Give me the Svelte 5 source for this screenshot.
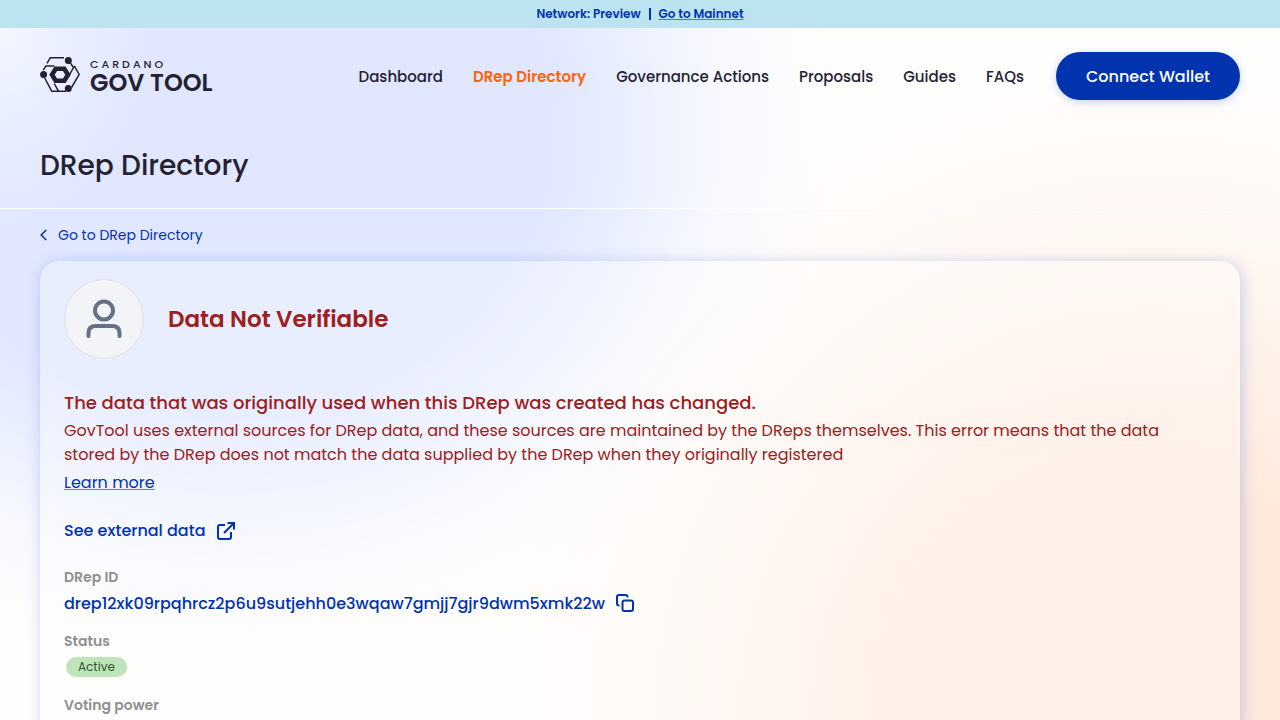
<script>
  const links = [
    { label: 'Dashboard' },
    { label: 'DRep Directory', active: true },
    { label: 'Governance Actions' },
    { label: 'Proposals' },
    { label: 'Guides' },
    { label: 'FAQs' },
  ];
  const drepId = 'drep12xk09rpqhrcz2p6u9sutjehh0e3wqaw7gmjj7gjr9dwm5xmk22w';
  const copyId = () => navigator.clipboard?.writeText(drepId);
</script>

<div class="page">
  <div class="network">
    <span>Network: Preview</span>
    <span class="bar"></span>
    <a href="#mainnet">Go to Mainnet</a>
  </div>

  <header>
    <a class="logo" href="#home" aria-label="Cardano GovTool">
      <svg width="40" height="36" viewBox="0 0 40 36" fill="none" stroke="#242232" stroke-width="1.5">
        <path d="M7 6.300 10.300 .8H24M3.300 13.200 5.800 9H14.500M34.300 8.800 39.200 17.500 31.500 30.500M29 4 33.500 10.500 28.300 20M4.700 21 11.700 34.200H18.500M14.200 26.500 18.500 34.200H26" />
        <path d="M15.700 11.700H24.300L28 17.700 24.300 23.700H15.700L12 17.700Z" stroke-width="4.600" />
        <g fill="#242232" stroke="none">
          <circle cx="3.600" cy="17.600" r="3.500" />
          <circle cx="28.300" cy="3.500" r="3.500" />
          <circle cx="28.300" cy="31.600" r="3.500" />
        </g>
      </svg>
      <span class="wordmark"><small>CARDANO</small><b>GOV TOOL</b></span>
    </a>
    <nav>
      <div class="links">
        {#each links as link}
          <a href="#nav" class:active={link.active}>{link.label}</a>
        {/each}
      </div>
      <button class="connect">Connect Wallet</button>
    </nav>
  </header>

  <div class="title"><h1>DRep Directory</h1></div>

  <main>
    <a class="back" href="#directory">
      <svg width="8" height="12" viewBox="0 0 8 12" fill="none" stroke="#0033ad" stroke-width="1.6"><path d="M6.200 1 1.200 6 6.200 11" /></svg>
      Go to DRep Directory
    </a>

    <section class="card">
      <div class="profile">
        <span class="avatar">
          <svg width="40" height="40" viewBox="0 0 40 40" fill="none" stroke="#667085" stroke-width="4" stroke-linecap="round">
            <circle cx="20" cy="11.500" r="9" />
            <path d="M4.500 37V34Q4.500 27 12 27H28Q35.500 27 35.500 34V37" />
          </svg>
        </span>
        <h2>Data Not Verifiable</h2>
      </div>

      <div class="notice">
        <h3>The data that was originally used when this DRep was created has changed.</h3>
        <p>GovTool uses external sources for DRep data, and these sources are maintained by the DReps themselves. This error means that the data stored by the DRep does not match the data supplied by the DRep when they originally registered</p>
        <a href="#learn">Learn more</a>
      </div>

      <a class="external" href="#external">
        See external data
        <svg width="20" height="20" viewBox="0 0 20 20" fill="none" stroke="#0033ad" stroke-width="2"><path d="M9 4H4Q2 4 2 6V16Q2 18 4 18H13Q15 18 15 16V11M8 12 18 2M11.500 2H18V8.500" /></svg>
      </a>

      <dl>
        <div>
          <dt>DRep ID</dt>
          <dd>
            <button class="copy" onclick={copyId}>
              {drepId}
              <svg width="20" height="20" viewBox="0 0 20 20" fill="none" stroke="#0033ad" stroke-width="2"><rect x="7.500" y="7.500" width="10.500" height="10.500" rx="2" /><path d="M4.500 12.500H4Q2 12.500 2 10.500V4Q2 2 4 2H10.500Q12.500 2 12.500 4V4.500" /></svg>
            </button>
          </dd>
        </div>
        <div>
          <dt>Status</dt>
          <dd><span class="status">Active</span></dd>
        </div>
        <div>
          <dt>Voting power</dt>
        </div>
      </dl>
    </section>
  </main>
</div>

<style>
  :global(body) {
    margin: 0;
    background: #fff;
  }
  .page {
    box-sizing: border-box;
    height: 100vh;
    overflow: hidden;
    font-family: Poppins, Inter, sans-serif;
    color: #242232;
    background:
      radial-gradient(ellipse 12% 30% at 0% 2%, #f6f8ff 0%, #f0f4ffaa 40%, #e0e7ff00 100%),
      radial-gradient(ellipse 52% 92% at 90% 100%, #ffe9dc 0%, #ffe9dc 36%, #ffeee4cc 56%, #fff4ee99 76%, #fff8f400 100%),
      radial-gradient(ellipse 48% 76% at 18% 18%, #e0e7ff 0%, #e0e7ff 52%, #e6ecffdd 64%, #f2f5ff99 80%, #ffffff00 100%),
      #fffefd;
  }
  a {
    color: #0033ad;
    text-decoration: none;
  }
  .network {
    display: flex;
    justify-content: center;
    align-items: center;
    gap: 8px;
    height: 28px;
    background: #bce4f0;
    color: #0033ad;
    font-size: 12px;
    font-weight: 600;
  }
  .network a,
  .notice a {
    text-decoration: underline;
    text-decoration-thickness: 1px;
    text-decoration-color: #0033ad99;
    text-underline-offset: 1px;
  }
  .bar {
    width: 2px;
    height: 12px;
    background: #0033ad;
  }
  header {
    display: flex;
    justify-content: space-between;
    align-items: center;
    padding: 24px 40px;
  }
  .logo {
    display: flex;
    align-items: flex-start;
    gap: 10px;
    color: #242232;
  }
  .wordmark {
    display: flex;
    flex-direction: column;
  }
  .wordmark small {
    font-size: 11px;
    line-height: 14px;
    letter-spacing: 3px;
    font-weight: 500;
  }
  .wordmark b {
    font-size: 24px;
    line-height: 24px;
    font-weight: 600;
  }
  nav {
    display: flex;
    align-items: center;
    gap: 32px;
  }
  .links {
    display: flex;
    gap: 30px;
    font-size: 15px;
    font-weight: 500;
  }
  .links a {
    color: #242232;
  }
  .links .active {
    color: #ff640a;
    font-weight: 600;
  }
  button {
    font-family: inherit;
    border: 0;
    cursor: pointer;
  }
  .connect {
    height: 48px;
    padding: 0 30px;
    border-radius: 24px;
    background: #0033ad;
    color: #fff;
    font-size: 16px;
    font-weight: 500;
    box-shadow: 0 2px 8px #2f62dc44;
  }
  .title {
    padding: 21px 40px;
    border-bottom: 1px solid #fff;
  }
  h1,
  h2,
  h3,
  p,
  dl,
  dd {
    margin: 0;
  }
  h1 {
    font-size: 28px;
    line-height: 42px;
    font-weight: 500;
  }
  main {
    padding: 16px 40px 0;
  }
  .back {
    display: flex;
    align-items: center;
    gap: 10px;
    font-size: 14px;
    line-height: 20px;
  }
  .card {
    margin-top: 16px;
    padding: 18px 24px 24px;
    border-radius: 20px;
    background: #ffffff4d;
    box-shadow: 2px 2px 15px #2f62dc47;
  }
  .profile {
    display: flex;
    align-items: center;
    gap: 24px;
    color: #9b2020;
  }
  .avatar {
    display: flex;
    align-items: center;
    justify-content: center;
    box-sizing: border-box;
    width: 80px;
    height: 80px;
    border: 1px solid #e1e1e5;
    border-radius: 50%;
    background: #f2f4f8;
  }
  h2 {
    font-size: 23px;
    line-height: 32px;
    font-weight: 600;
  }
  .notice {
    display: flex;
    flex-direction: column;
    align-items: flex-start;
    gap: 4px;
    margin-top: 32px;
    padding-right: 32px;
    color: #9b2020;
    font-size: 16px;
    line-height: 24px;
  }
  h3 {
    font-size: 18px;
    line-height: 24px;
    font-weight: 500;
  }
  .external {
    display: flex;
    align-items: center;
    gap: 10px;
    margin-top: 24px;
    font-size: 16px;
    line-height: 24px;
    font-weight: 500;
  }
  dl {
    display: flex;
    flex-direction: column;
    gap: 12px;
    margin-top: 24px;
  }
  dt {
    color: #8e908e;
    font-size: 14px;
    line-height: 20px;
    font-weight: 600;
  }
  dd {
    display: flex;
    align-items: center;
    height: 32px;
  }
  .copy {
    display: flex;
    align-items: center;
    gap: 10px;
    padding: 0;
    background: none;
    color: #0033ad;
    font-size: 16px;
    font-weight: 500;
  }
  .status {
    margin-left: 2px;
    padding: 0 12px;
    border-radius: 10px;
    background: #c0e4ba;
    color: #2c5a2e;
    font-size: 12px;
    line-height: 20px;
    font-weight: 400;
  }
</style>
